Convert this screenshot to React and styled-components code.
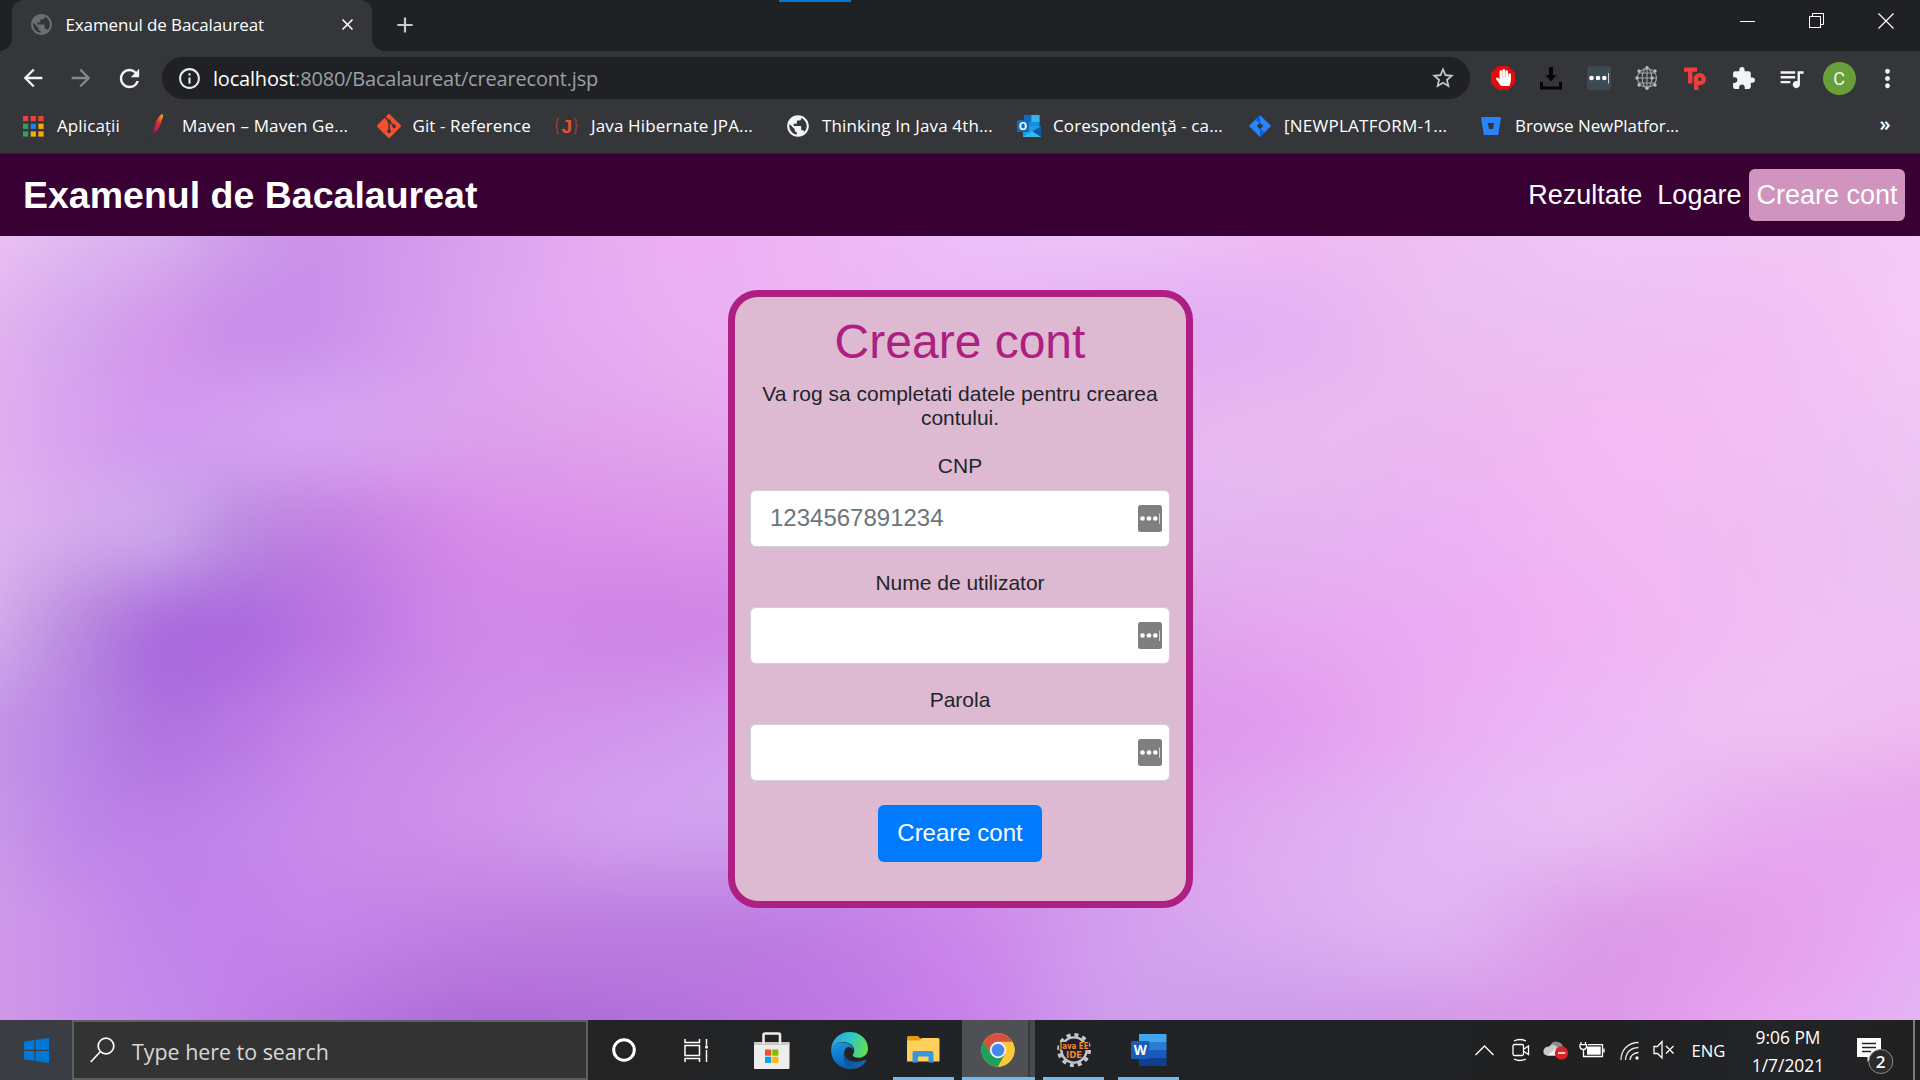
import React from 'react';
import styled, { createGlobalStyle } from 'styled-components';
import {
  MdPublic, MdClose, MdAdd, MdArrowBack, MdArrowForward, MdRefresh, MdInfoOutline,
  MdStarBorder, MdExtension, MdQueueMusic, MdMoreVert,
} from 'react-icons/md';
import { SiGit, SiBitbucket } from 'react-icons/si';
import { FaHandPaper } from 'react-icons/fa';

const ui = '"Segoe UI", "Open Sans", "Noto Sans", sans-serif';
const page = '"Liberation Sans", Arial, sans-serif';

const GlobalStyle = createGlobalStyle`
  *, *::before, *::after { box-sizing: border-box; }
  body { margin: 0; overflow: hidden; background: #202124; }
  svg { display: block; flex: none; }
`;

const Screen = styled.div`
  width: 1920px;
  height: 1080px;
  display: flex;
  flex-direction: column;
  overflow: hidden;
  font-family: ${ui};
  color: #fff;
`;

/* ---------- browser chrome ---------- */

const TabStrip = styled.div`
  height: 51px;
  flex: none;
  display: flex;
  position: relative;
  background: #202124;
  padding-left: 12px;
`;

const LoadingMark = styled.div`
  position: absolute;
  top: 0;
  left: 779px;
  width: 72px;
  height: 2px;
  background: #0078d7;
`;

const Tab = styled.div`
  position: relative;
  width: 360px;
  display: flex;
  align-items: center;
  padding: 0 15px 2px 17px;
  border-radius: 12px 12px 0 0;
  background: #35363a;
  &::before, &::after {
    content: '';
    position: absolute;
    bottom: 0;
    width: 12px;
    height: 12px;
  }
  &::before { left: -12px; background: radial-gradient(circle at 0 0, #202124 11.5px, #35363a 12px); }
  &::after { right: -12px; background: radial-gradient(circle at 100% 0, #202124 11.5px, #35363a 12px); }
`;

const TabTitle = styled.span`
  flex: 1;
  margin-left: 11.5px;
  font-size: 17px;
  line-height: 24px;
  letter-spacing: -0.12px;
  white-space: nowrap;
`;

const NewTab = styled.div`
  width: 66px;
  padding-bottom: 2px;
  display: flex;
  align-items: center;
  justify-content: center;
  color: #c8cacd;
`;

const WindowButtons = styled.div`
  margin-left: auto;
  height: 42px;
  display: flex;
`;

const Cell = styled.div`
  width: ${(p) => p.$w || 48}px;
  height: 100%;
  flex: none;
  display: flex;
  align-items: center;
  justify-content: center;
  color: ${(p) => p.$color || '#f1f3f4'};
`;

const Toolbar = styled.div`
  height: 54px;
  flex: none;
  display: flex;
  align-items: center;
  padding: 0 9px;
  background: #35363a;
`;

const Omnibox = styled.div`
  width: 1308px;
  height: 42px;
  margin: 0 9px;
  padding: 0 14px 0 15px;
  display: flex;
  align-items: center;
  border-radius: 21px;
  background: #202124;
`;

const Url = styled.span`
  flex: 1;
  margin: 1px 0 0 11px;
  font-size: 20px;
  line-height: 28px;
  letter-spacing: -0.19px;
  color: #9aa0a6;
  white-space: nowrap;
  b { font-weight: 400; color: #fff; }
`;

const Avatar = styled.div`
  width: 33px;
  height: 33px;
  border-radius: 50%;
  background: #689f38;
  font: 18px/33px Roboto, sans-serif;
  text-align: center;
`;

const BookmarkBar = styled.div`
  height: 49px;
  flex: none;
  display: flex;
  align-items: center;
  padding: 0 11px 6px 21px;
  background: #35363a;
  border-bottom: 1px solid #292a2d;
`;

const Bookmark = styled.div`
  width: ${(p) => p.$w}px;
  flex: none;
  display: flex;
  align-items: center;
  gap: 12px;
  font-size: 17px;
  line-height: 24px;
  letter-spacing: ${(p) => p.$ls}px;
  white-space: nowrap;
`;

const IconSlot = styled.span`
  width: 24px;
  height: 24px;
  flex: none;
  display: flex;
  align-items: center;
  justify-content: center;
`;

const More = styled.div`
  width: 48px;
  margin-left: auto;
  padding-bottom: 5px;
  text-align: center;
  font-size: 20px;
  font-weight: 600;
  line-height: 24px;
`;

/* ---------- web page ---------- */

const Header = styled.header`
  height: 82px;
  flex: none;
  display: flex;
  align-items: center;
  justify-content: space-between;
  padding: 0 15px 0 23px;
  background: #380033;
  font-family: ${page};
`;

const Brand = styled.div`
  font-size: 37.5px;
  font-weight: 700;
  line-height: 44px;
`;

const Nav = styled.nav`
  display: flex;
`;

const NavLink = styled.a`
  height: 52px;
  padding: 0 7.5px;
  border-radius: 6px;
  font-size: 27px;
  line-height: 52px;
  white-space: nowrap;
  background: ${(p) => (p.$active ? '#d094bf' : 'transparent')};
`;

const Main = styled.main`
  height: 784px;
  flex: none;
  display: grid;
  overflow: hidden;
  font-family: ${page};
`;

const Backdrop = styled.canvas`
  grid-area: 1 / 1;
  width: 1920px;
  height: 784px;
`;

const Card = styled.form`
  grid-area: 1 / 1;
  position: relative;
  width: 465px;
  height: 618px;
  margin: 54px 0 0 728px;
  padding: 17px 16px 0 15px;
  border: 7px solid #ad1f82;
  border-radius: 30px;
  background: #debad2;
  display: flex;
  flex-direction: column;
  align-items: center;
  color: #212529;
  text-align: center;
`;

const Title = styled.h1`
  margin: 0 0 13px;
  font-size: 48px;
  font-weight: 400;
  line-height: 55px;
  color: #ad1f82;
`;

const Intro = styled.p`
  width: 100%;
  margin: 0 0 24px;
  font-size: 21px;
  line-height: 24px;
`;

const Field = styled.label`
  width: 420px;
  margin-bottom: 24px;
  display: flex;
  flex-direction: column;
  gap: 12px;
  font-size: 21px;
  line-height: 24px;
`;

const InputBox = styled.span`
  height: 57px;
  display: flex;
  align-items: center;
  padding: 0 7px 0 19px;
  border: 1px solid #ced4da;
  border-radius: 6px;
  background: #fff;
`;

const Input = styled.input`
  flex: 1;
  min-width: 0;
  height: 40px;
  padding: 0 0 1px;
  border: 0;
  outline: 0;
  background: transparent;
  font: 24px ${page};
  &::placeholder { color: #6c757d; opacity: 1; }
`;

const Submit = styled.button`
  width: 164px;
  height: 57px;
  padding: 0 0 2px;
  border: 0;
  border-radius: 6px;
  background: #007bff;
  color: #fff;
  font: 24px/55px ${page};
`;

/* ---------- taskbar ---------- */

const Taskbar = styled.footer`
  height: 60px;
  flex: none;
  display: flex;
  background: linear-gradient(90deg, #242424 30%, #202327 50%, #212326 70%, #202020 82%, #222428 92%, #202020 100%);
`;

const Start = styled.div`
  width: 72px;
  display: flex;
  align-items: center;
  justify-content: center;
  background: #3a3e44;
`;

const Search = styled.div`
  width: 516px;
  padding-left: 16px;
  display: flex;
  align-items: center;
  gap: 17px;
  border: 2px solid #5f5f5f;
  background: #333;
  color: #d8d8d8;
  font-size: 21.4px;
  line-height: 30px;
  white-space: nowrap;
`;

const SearchText = styled.span`
  padding-top: 3px;
`;

const TaskButton = styled.div`
  width: ${(p) => p.$w || 75}px;
  height: 60px;
  flex: none;
  display: flex;
  align-items: center;
  justify-content: center;
  background: ${(p) =>
    p.$open
      ? 'linear-gradient(#76b9ed, #76b9ed) 50% 100% / 61px 3px no-repeat'
      : 'transparent'};
`;

const ActiveTask = styled.div`
  width: 73px;
  margin: 0 1px;
  padding: 3px 2px 0 0;
  flex: none;
  display: flex;
  align-items: center;
  justify-content: center;
  border-bottom: 3px solid #76b9ed;
  background: linear-gradient(90deg, #4e5053 66px, #393b3e 66px, #393b3e 68px, #47494c 68px);
`;

const Tray = styled.div`
  margin-left: auto;
  width: 456px;
  display: flex;
  align-items: center;
`;

const TrayIcon = styled.div`
  width: ${(p) => p.$w}px;
  padding-top: ${(p) => p.$drop || 0}px;
  flex: none;
  display: flex;
  justify-content: center;
`;

const Language = styled.div`
  width: 59px;
  padding: 1px 0 0 2px;
  text-align: center;
  font-size: 16.6px;
  line-height: 24px;
`;

const Clock = styled.div`
  width: 101px;
  padding: 1px 0 0 1px;
  text-align: center;
  font-size: 17.4px;
  line-height: 28px;
  white-space: nowrap;
`;

const ShowDesktop = styled.div`
  width: 7px;
  height: 60px;
  margin-left: auto;
  border-left: 2px solid #7c7c7c;
`;

/* ---------- drawings ---------- */

const AppsIcon = () => (
  <svg width="21" height="21" viewBox="0 0 21 21">
    {['#ea4335', '#ea4335', '#ea4335', '#34a060', '#1a82f0', '#f9ab00', '#34a060', '#f9ab00', '#f9ab00'].map((c, i) => (
      <rect key={i} x={(i % 3) * 7.7} y={Math.floor(i / 3) * 7.7} width="5.2" height="5.2" fill={c} />
    ))}
  </svg>
);

const FeatherIcon = () => (
  <svg width="24" height="26" viewBox="0 0 24 26">
    <defs>
      <linearGradient id="feather" x1="0.8" y1="0" x2="0.2" y2="1">
        <stop offset="0" stopColor="#f59b1f" />
        <stop offset="0.35" stopColor="#dc2a35" />
        <stop offset="0.7" stopColor="#a02060" />
        <stop offset="1" stopColor="#352060" />
      </linearGradient>
    </defs>
    <path d="M16.500 1 C13.500 2 10 7 9 12 L7 19 L4.500 25 L5.500 25 L8.500 19.500 C12.500 18 14.500 12 15.500 8 C16.500 5 18 3 16.500 1 Z" fill="url(#feather)" />
  </svg>
);

const BracedJ = () => (
  <svg width="26" height="24" viewBox="0 0 26 24">
    <text x="12.800" y="18.500" textAnchor="middle" fontFamily="Liberation Sans, sans-serif" fontWeight="700" fontSize="19" fill="#e8502c">J</text>
    <path d="M5 4.500 Q3 4.500 3 7 L3 10 Q3 12 1 12 Q3 12 3 14 L3 17 Q3 19.500 5 19.500 M20 4.500 Q22 4.500 22 7 L22 10 Q22 12 24 12 Q22 12 22 14 L22 17 Q22 19.500 20 19.500" fill="none" stroke="#8b4032" strokeWidth="1.500" />
  </svg>
);

const OutlookIcon = () => (
  <svg width="24" height="22" viewBox="0 0 24 22">
    <rect x="7" y="0" width="15.500" height="14" fill="#1490df" />
    <rect x="7" y="0" width="7.500" height="7" fill="#0f6cbd" />
    <rect x="14.500" y="0" width="8" height="7" fill="#32b5f1" />
    <path d="M6 11 L24 11 L24 22 L6 22 Z" fill="#1b9de2" />
    <path d="M24 11 L15 17 L24 22 Z" fill="#0c59a4" />
    <path d="M6 22 L15 16 L24 22 Z" fill="#35b8f1" />
    <rect x="0" y="5" width="12" height="12" rx="1" fill="#0f6cbd" />
    <text x="6" y="14.800" textAnchor="middle" fontFamily="Open Sans, sans-serif" fontWeight="700" fontSize="10.500" fill="#fff">O</text>
  </svg>
);

const DiamondIcon = () => (
  <svg width="22" height="22" viewBox="0 0 22 22">
    <path d="M11 0 L22 11 L11 22 L0 11 Z" fill="#2684ff" />
    <path d="M11 0 L7 4 Q7 7 11 8 Z M11 22 L15 18 Q15 15 11 14 Z" fill="#0d5fd6" />
    <path d="M11 7.700 L14.300 11 L11 14.300 L7.700 11 Z" fill="#35363a" />
  </svg>
);

const BlockerIcon = () => (
  <svg width="24" height="24" viewBox="0 0 24 24">
    <path d="M7 0 L17 0 L24 7 L24 17 L17 24 L7 24 L0 17 L0 7 Z" fill="#e60b0b" />
    <g transform="translate(4 3)">
      <FaHandPaper size={17} color="#fff" />
    </g>
  </svg>
);

const DownloadIcon = () => (
  <svg width="24" height="24" viewBox="0 0 24 24" fill="#050505">
    <path d="M10 1 L14 1 L14 9 L17.500 9 L12 15.500 L6.500 9 L10 9 Z" />
    <path d="M1 16 L4 16 L4 20.500 L20 20.500 L20 16 L23 16 L23 23.500 L1 23.500 Z" />
  </svg>
);

const DotsIcon = ({ width = 24, height = 24, fill = '#3c4a54' }) => (
  <svg width={width} height={height} viewBox={`0 0 24 ${height}`}>
    <rect width="24" height={height} rx="2.500" fill={fill} />
    {[4.500, 11, 17.300].map((x) => <circle key={x} cx={x} cy={height / 2} r="2.300" fill="#fff" />)}
    <rect x="21" y={height / 2 - 5} width="1" height="10.500" fill="#d0d0d0" />
  </svg>
);

const NetGlobe = () => (
  <svg width="24" height="24" viewBox="0 0 24 24" fill="none" stroke="#a3a6a9" strokeWidth="1.100">
    <circle cx="12" cy="12" r="9.500" />
    <ellipse cx="12" cy="12" rx="4.800" ry="9.500" />
    <path d="M2.500 12 H21.500 M12 2.500 V21.500 M4.500 7 H19.500 M4.500 17 H19.500" />
    <g fill="#b8bbbe" stroke="none">
      {[[12, 1.7], [4, 5], [20, 5], [17, 12], [4, 19], [20, 19], [12, 22.3], [2, 12]].map(([x, y]) => <circle key={`${x}-${y}`} cx={x} cy={y} r="1.700" />)}
    </g>
  </svg>
);

const TpIcon = () => (
  <svg width="24" height="24" viewBox="0 0 24 24">
    <g fill="none" stroke="#ef3e3a" strokeWidth="4.300">
      <path d="M1 3.600 H14 M7.200 3 V17.500" />
      <path d="M13.200 24 V12.500" />
      <circle cx="16.700" cy="13.200" r="4" />
    </g>
  </svg>
);

const RestoreIcon = () => (
  <svg width="16" height="16" viewBox="0 0 16 16" fill="none" stroke="#fff">
    <rect x="0.500" y="3.500" width="11" height="11" />
    <path d="M3.500 3.500 V0.500 H14.500 V11.500 H11.500" />
  </svg>
);

const WindowsLogo = () => (
  <svg width="25" height="25" viewBox="0 0 25 25" fill="#0078d7">
    <path d="M0 3.600 L10.300 2.100 V11.800 H0 Z M11.400 1.900 L25 0 V11.800 H11.400 Z M0 13 H10.300 V22.800 L0 21.400 Z M11.400 13 H25 V25 L11.400 23 Z" />
  </svg>
);

const SearchIcon = () => (
  <svg width="25" height="26" viewBox="0 0 25 26" fill="none" stroke="#fff" strokeWidth="1.700">
    <circle cx="16" cy="9" r="7.800" />
    <path d="M10.500 14.500 L0.700 25" />
  </svg>
);

const TaskViewIcon = () => (
  <svg width="25" height="25" viewBox="0 0 25 25" fill="none" stroke="#fff" strokeWidth="1.500">
    <path d="M1 1 V4.500 H15.500 V1 M1 24 V20.500 H15.500 V24 M22.500 1 V7 M22.500 12 V24" />
    <rect x="1" y="7.500" width="14.500" height="10" />
    <rect x="21.200" y="7.500" width="2.600" height="3" fill="#fff" stroke="none" />
  </svg>
);

const StoreIcon = () => (
  <svg width="36" height="37" viewBox="0 0 36 37">
    <rect x="0" y="10" width="35.500" height="27" rx="1" fill="#ededed" />
    <rect x="0" y="10" width="35.500" height="3" fill="#c9c9c9" />
    <path d="M9.500 12 V3 Q9.500 1.500 11 1.500 H24.500 Q26 1.500 26 3 V12" fill="none" stroke="#ececec" strokeWidth="2.600" />
    <rect x="11" y="17.500" width="6.200" height="6.200" fill="#f25022" />
    <rect x="18.200" y="17.500" width="6.200" height="6.200" fill="#7fba00" />
    <rect x="11" y="24.700" width="6.200" height="6.200" fill="#00a4ef" />
    <rect x="18.200" y="24.700" width="6.200" height="6.200" fill="#ffb900" />
  </svg>
);

const EdgeIcon = () => (
  <svg width="37" height="37" viewBox="0 0 256 256">
    <defs>
      <linearGradient id="edgeTop" x1="0" y1="0.300" x2="1" y2="0.500">
        <stop offset="0" stopColor="#2aa5e0" />
        <stop offset="0.500" stopColor="#30c4c8" />
        <stop offset="1" stopColor="#64de50" />
      </linearGradient>
      <linearGradient id="edgeSwirl" x1="0" y1="0" x2="0.300" y2="1">
        <stop offset="0" stopColor="#1b9de2" />
        <stop offset="1" stopColor="#0a5fbd" />
      </linearGradient>
      <linearGradient id="edgeDark" x1="0" y1="0" x2="1" y2="0.500">
        <stop offset="0" stopColor="#0c4a8c" />
        <stop offset="1" stopColor="#1464ac" />
      </linearGradient>
    </defs>
    <path d="M105 105 C82 130 82 200 170 206 C200 208 220 198 232 194 C240 190 246 198 240 206 C215 240 180 256 140 256 C90 256 60 200 66 150 C70 120 90 106 105 105 Z" fill="url(#edgeDark)" />
    <path d="M1 130 C0 90 40 72 84 72 C130 72 152 100 152 124 C130 90 95 100 88 150 C82 200 110 250 150 255 C60 262 2 200 1 130 Z" fill="url(#edgeSwirl)" />
    <path d="M1 128 C2 50 60 0 128 0 C205 0 256 55 256 112 C256 160 222 178 190 178 C155 178 148 163 151 156 C155 149 162 142 160 122 C155 90 120 70 86 70 C40 70 8 92 1 128 Z" fill="url(#edgeTop)" />
  </svg>
);

const FolderIcon = () => (
  <svg width="33" height="28" viewBox="0 0 33 28">
    <path d="M0 1.500 Q0 0 1.500 0 H11 L15 4 V9 H0 Z" fill="#e0a00d" />
    <path d="M0 4.500 H12 L15 2 H31 Q32.500 2 32.500 3.500 V25.500 H0 Z" fill="#ffd15c" />
    <path d="M5.500 26.500 V17 Q5.500 15 7.500 15 H24.500 Q26.500 15 26.500 17 V26.500 H21.500 V20.500 H11 V26.500 Z" fill="#3a96dd" />
  </svg>
);

const ChromeIcon = () => (
  <svg width="34" height="34" viewBox="0 0 48 48">
    <circle cx="24" cy="24" r="23.500" fill="#fcc934" />
    <path d="M3.650 12.250 A23.500 23.500 0 0 1 44.350 12.250 L24 12.500 Z M3.650 12.250 L14 30 L24 24 L24 12.300 Z" fill="#d64f40" />
    <path d="M3.650 12.250 A23.500 23.500 0 0 0 24 47.500 L34.200 30 L24 24 L14 30 Z" fill="#1da05c" />
    <path d="M24 13 H44.750 A23.500 23.500 0 0 1 24 47.500 L34 30 Z" fill="#fcc934" />
    <circle cx="24" cy="24" r="11.500" fill="#f4f6fb" />
    <circle cx="24" cy="24" r="9" fill="#4688f1" />
  </svg>
);

const GearIcon = () => (
  <svg width="36" height="36" viewBox="0 0 36 36">
    <circle cx="18" cy="18" r="15.200" fill="none" stroke="#c4c6c8" strokeWidth="3.600" strokeDasharray="3.980 3.980" />
    <circle cx="18" cy="18" r="12.600" fill="#241e33" stroke="#c4c6c8" strokeWidth="2.400" />
    <rect x="3" y="10" width="30" height="8" fill="#241e33" />
    <text x="18" y="17" textAnchor="middle" fontFamily="DejaVu Sans Condensed, DejaVu Sans, sans-serif" fontSize="8.500" fontWeight="700" fill="#f08a24" textLength="29" lengthAdjust="spacingAndGlyphs">Java EE</text>
    <text x="18" y="25.500" textAnchor="middle" fontFamily="DejaVu Sans, sans-serif" fontSize="8.500" fontWeight="700" fill="#f08a24">IDE</text>
  </svg>
);

const WordIcon = () => (
  <svg width="36" height="32" viewBox="0 0 36 32">
    <rect x="8" y="0" width="27.500" height="8" fill="#41a5ee" />
    <rect x="8" y="8" width="27.500" height="8" fill="#2b7cd3" />
    <rect x="8" y="16" width="27.500" height="8" fill="#185abd" />
    <rect x="8" y="24" width="27.500" height="8" fill="#103f91" />
    <rect x="0" y="7" width="18.500" height="18" rx="1.500" fill="#185abd" />
    <text x="9.200" y="20.700" textAnchor="middle" fontFamily="Open Sans, sans-serif" fontWeight="700" fontSize="13.500" fill="#fff">W</text>
  </svg>
);

const CameraIcon = () => (
  <svg width="18" height="24" viewBox="0 0 18 24" fill="none" stroke="#fff" strokeWidth="1.300">
    <rect x="1" y="6.500" width="10.500" height="11" rx="1.500" />
    <path d="M12 11 L16.500 8 V16.500 L12 13.500 M2 3 Q7.500 0 14 3 M2 21 Q7.500 24 14 21" />
  </svg>
);

const CloudIcon = () => (
  <svg width="26" height="22" viewBox="0 0 26 22">
    <path d="M7 8 Q9 1 15 3 Q20 4 20 9 L12 12 Z" fill="#8c8c8c" />
    <path d="M4 16.500 Q0 16 0.500 11.500 Q1.500 7.500 6 7.500 Q10 3.500 14 8 L21 12 L18 16.500 Z" fill="#c9c9c9" />
    <path d="M4 16.500 L13 9.500 Q18 8 20 12 L19 16.500 Z" fill="#f2f2f2" />
    <circle cx="18.500" cy="14" r="6.700" fill="#da2128" />
    <rect x="15" y="13.200" width="7.200" height="1.600" fill="#fff" />
  </svg>
);

const BatteryIcon = () => (
  <svg width="26" height="18" viewBox="0 0 26 18" fill="none" stroke="#fff" strokeWidth="1.300">
    <path d="M9 3.700 H23.500 V15.500 H4.500 V9 M25 7.500 V11.500 M2 1 V3.500 M6.500 1 V3.500" />
    <path d="M1 3.700 H7.500 V6 Q7 8.500 4.300 8.500 Q1.500 8.500 1 6 Z" />
    <rect x="8" y="5.500" width="13.700" height="8.200" fill="#fff" stroke="none" />
  </svg>
);

const WifiIcon = () => (
  <svg width="20" height="20" viewBox="0 0 20 20" fill="none" stroke="#e6e6e6" strokeWidth="1.300">
    <path d="M1 19 C1 9 8 1.500 18.500 1.500 M5.500 19 C6 11.500 10.500 7 18.500 6.500 M10 19 C10.500 14.500 13 12 18.500 11.500" />
    <circle cx="17" cy="17" r="1.700" fill="#fff" stroke="none" />
  </svg>
);

const MutedIcon = () => (
  <svg width="22" height="20" viewBox="0 0 22 20" fill="none" stroke="#fff" strokeWidth="1.300">
    <path d="M1 6.500 H4.500 L9 1.500 V18 L4.500 13.500 H1 Z M13 6 L20.500 13.500 M20.500 6 L13 13.500" />
  </svg>
);

const NotificationIcon = () => (
  <svg width="37" height="37" viewBox="0 0 37 37">
    <path d="M0 0 H24 V19 H16 L10.500 24 V19 H0 Z" fill="#fff" />
    <path d="M5 5.500 H19 M5 9.500 H19 M5 13.500 H14" stroke="#222" strokeWidth="1.300" />
    <circle cx="23.800" cy="23.500" r="12" fill="#2b2b2b" stroke="#8a8a8a" strokeWidth="1" />
    <text x="23.600" y="29.500" textAnchor="middle" fontFamily="Open Sans, sans-serif" fontWeight="600" fontSize="17" fill="#fff">2</text>
  </svg>
);

/* ---------- backdrop ---------- */

const washStops = [0, 80, 160, 240, 320, 480, 640, 800, 960, 1120, 1280, 1440, 1600, 1760, 1920];
const washColors = [
  'eac0f4 e0b8f0 d8aeee cf9cea cb92ea d9a2ee ebaef2 edb4f4 edbef8 edc2f8 eebaf3 eebff3 f0c6f8 f2c6f5 f5caf6',
  'e2b2ef d6a6ee d398eb ca90ea cb92ec dca2ef e8acf2 ecb2f3 e8b6f6 e4b0f3 e5b2f4 ebbdf0 eebff2 f2c0f4 f5c9f6',
  'e0adef d8a2ef d29af0 d49ef0 d6a2f1 dca0ec e2a4ec e6aaf0 e8b2f2 e6b4f0 e8b9f0 ebb8f0 f3baf3 f2bff4 efc6f5',
  'deb2ef d4a8ec cba2ea be8ce2 c282e2 d78ce9 db92ea dc98ea e0a6ee e3b3ef e5b4f0 ebb2f4 f1b8f3 efbdf2 ecc4f2',
  'd2a8ea bb8ae0 ad70de ad6cde b974e2 d088e8 d086e6 d48ae8 d692e8 dba2ea e5a7ef ebadf3 f0b4f3 f0bdf3 efc2f3',
  'c594e8 b884e4 b074e0 b878e4 c283e7 cf8eea d196ec d4a0f0 d898ea dc98ea e29def eaaef2 ecb8f6 eebff2 eebaf0',
  'c896e8 be86e8 bd80e8 c184ea c889ea cf92ea d29eee d0a0ee d496ea db9aec dfaaf0 e4b6f5 e9bbf3 e7acf0 e7a8ed',
  'cf98ea c88eea c184ea c282ea c484e9 c080e2 bd80e1 c080e4 cc88ea d39eee dbaaf0 e0b2f2 dd9fe9 e5a0ec e8aef4',
  'cf98e8 c88eea c388ea c080e8 ba7ae2 b06cd8 b36fda bc76e2 c880ea cf9cec ce9cec d49aea de98ea e7a4f0 e4b4f4',
].map((row) => row.split(' ').map((c) => [0, 2, 4].map((i) => parseInt(c.slice(i, i + 2), 16))));
const rowStops = washColors.map((_, i) => i * 98);

// Smooth curve through (xs, ys), evaluated at x.
function curve(xs, ys, x) {
  let i = 0;
  while (i < xs.length - 2 && x > xs[i + 1]) i += 1;
  const slope = (k) => {
    const a = Math.max(0, k - 1);
    const b = Math.min(xs.length - 1, k + 1);
    return (ys[b] - ys[a]) / (xs[b] - xs[a]);
  };
  const h = xs[i + 1] - xs[i];
  const t = (x - xs[i]) / h;
  const u = 1 - t;
  return ys[i] * (1 + 2 * t) * u * u + slope(i) * h * t * u * u
    + ys[i + 1] * t * t * (3 - 2 * t) - slope(i + 1) * h * t * t * u;
}

function paintBackdrop(canvas) {
  if (!canvas) return;
  const ctx = canvas.getContext('2d');
  const { width, height } = canvas;
  const image = ctx.createImageData(width, height);
  for (let px = 0; px < width; px += 1) {
    const x = ((px + 0.5) / width) * 1920;
    const column = [0, 1, 2].map((ch) => washColors.map((row) => curve(washStops, row.map((c) => c[ch]), x)));
    for (let py = 0; py < height; py += 1) {
      const y = ((py + 0.5) / height) * 784;
      const at = (py * width + px) * 4;
      for (let ch = 0; ch < 3; ch += 1) image.data[at + ch] = curve(rowStops, column[ch], y);
      image.data[at + 3] = 255;
    }
  }
  ctx.putImageData(image, 0, 0);
}

/* ---------- data ---------- */

const bookmarks = [
  { label: 'Aplicații', w: 125, ls: 0.1, icon: <AppsIcon /> },
  { label: 'Maven – Maven Ge...', w: 230.5, ls: 0.14, icon: <FeatherIcon /> },
  { label: 'Git - Reference', w: 178.5, ls: 0.1, icon: <SiGit size={24} color="#f4502f" /> },
  { label: 'Java Hibernate JPA...', w: 231, ls: 0.14, icon: <BracedJ /> },
  { label: 'Thinking In Java 4th...', w: 231, ls: 0.15, icon: <MdPublic size={26} color="#f1f3f4" /> },
  { label: 'Corespondenţă - ca...', w: 231, ls: 0.1, icon: <OutlookIcon /> },
  { label: '[NEWPLATFORM-1...', w: 231, ls: 0.25, icon: <DiamondIcon /> },
  { label: 'Browse NewPlatfor...', w: 231, ls: -0.07, icon: <SiBitbucket size={20} color="#2684ff" /> },
];

export default function App() {
  return (
    <Screen>
      <GlobalStyle />
      <TabStrip>
        <LoadingMark />
        <Tab>
          <MdPublic size={25} color="#6b6e73" />
          <TabTitle>Examenul de Bacalaureat</TabTitle>
          <MdClose size={19} color="#fff" />
        </Tab>
        <NewTab><MdAdd size={26} /></NewTab>
        <WindowButtons>
          <Cell $w={69}><svg width="15" height="1"><rect width="15" height="1" fill="#fff" /></svg></Cell>
          <Cell $w={69}><RestoreIcon /></Cell>
          <Cell $w={69}>
            <svg width="16" height="16" stroke="#fff" strokeWidth="1.200"><path d="M0.500 0.500 L15.500 15.500 M15.500 0.500 L0.500 15.500" /></svg>
          </Cell>
        </WindowButtons>
      </TabStrip>

      <Toolbar>
        <Cell><MdArrowBack size={28} /></Cell>
        <Cell $color="#86888b"><MdArrowForward size={28} /></Cell>
        <Cell><MdRefresh size={29} /></Cell>
        <Omnibox>
          <MdInfoOutline size={25} color="#e8eaed" />
          <Url><b>localhost</b>:8080/Bacalaureat/crearecont.jsp</Url>
          <MdStarBorder size={26} color="#c5c8cb" />
        </Omnibox>
        <Cell><BlockerIcon /></Cell>
        <Cell><DownloadIcon /></Cell>
        <Cell><DotsIcon /></Cell>
        <Cell><NetGlobe /></Cell>
        <Cell><TpIcon /></Cell>
        <Cell><MdExtension size={25} /></Cell>
        <Cell><MdQueueMusic size={29} /></Cell>
        <Cell><Avatar>C</Avatar></Cell>
        <Cell><MdMoreVert size={29} /></Cell>
      </Toolbar>

      <BookmarkBar>
        {bookmarks.map((b) => (
          <Bookmark key={b.label} $w={b.w} $ls={b.ls}>
            <IconSlot>{b.icon}</IconSlot>
            {b.label}
          </Bookmark>
        ))}
        <More>»</More>
      </BookmarkBar>

      <Header>
        <Brand>Examenul de Bacalaureat</Brand>
        <Nav>
          <NavLink>Rezultate</NavLink>
          <NavLink>Logare</NavLink>
          <NavLink $active>Creare cont</NavLink>
        </Nav>
      </Header>

      <Main>
        <Backdrop ref={paintBackdrop} width={480} height={196} />
        <Card>
          <Title>Creare cont</Title>
          <Intro>Va rog sa completati datele pentru crearea contului.</Intro>
          {['CNP', 'Nume de utilizator', 'Parola'].map((label, i) => (
            <Field key={label}>
              {label}
              <InputBox>
                <Input type={i === 2 ? 'password' : 'text'} placeholder={i === 0 ? '1234567891234' : undefined} />
                <DotsIcon height={27} fill="#7f7f7f" />
              </InputBox>
            </Field>
          ))}
          <Submit type="button">Creare cont</Submit>
        </Card>
      </Main>

      <Taskbar>
        <Start><WindowsLogo /></Start>
        <Search><SearchIcon /><SearchText>Type here to search</SearchText></Search>
        <TaskButton $w={72}>
          <svg width="26" height="26"><circle cx="13" cy="13" r="10.300" fill="none" stroke="#fff" strokeWidth="3" /></svg>
        </TaskButton>
        <TaskButton $w={72}><TaskViewIcon /></TaskButton>
        <TaskButton $w={80}><StoreIcon /></TaskButton>
        <TaskButton $w={74}><EdgeIcon /></TaskButton>
        <TaskButton $open><FolderIcon /></TaskButton>
        <ActiveTask><ChromeIcon /></ActiveTask>
        <TaskButton $open><GearIcon /></TaskButton>
        <TaskButton $open><WordIcon /></TaskButton>
        <Tray>
          <TrayIcon $w={40}>
            <svg width="19" height="11" fill="none" stroke="#fff" strokeWidth="1.400"><path d="M0.500 10 L9.500 1 L18.500 10" /></svg>
          </TrayIcon>
          <TrayIcon $w={34}><CameraIcon /></TrayIcon>
          <TrayIcon $w={36}><CloudIcon /></TrayIcon>
          <TrayIcon $w={36}><BatteryIcon /></TrayIcon>
          <TrayIcon $w={40} $drop={1}><WifiIcon /></TrayIcon>
          <TrayIcon $w={28}><MutedIcon /></TrayIcon>
          <Language>ENG</Language>
          <Clock>9:06 PM<br />1/7/2021</Clock>
          <TrayIcon $w={75} $drop={13}><NotificationIcon /></TrayIcon>
          <ShowDesktop />
        </Tray>
      </Taskbar>
    </Screen>
  );
}
